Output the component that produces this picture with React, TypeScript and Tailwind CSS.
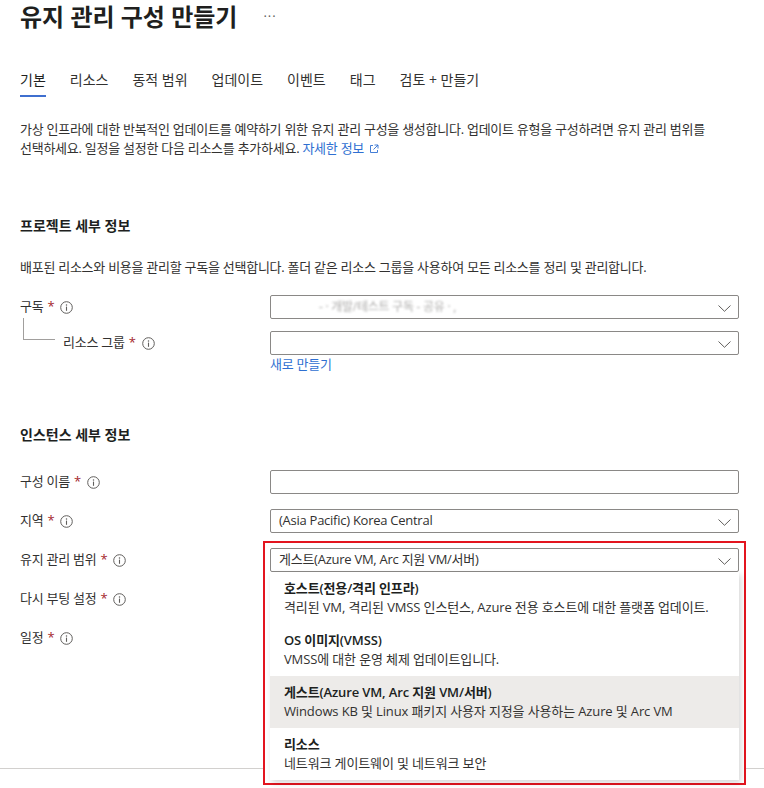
import React from 'react';

const InfoIcon: React.FC = () => (
    <svg width="13" height="13" viewBox="0 0 13 13" className="ml-[6px] shrink-0" fill="none">
        <circle cx="6.5" cy="6.5" r="5.8" stroke="#605e5c" strokeWidth="1" />
        <circle cx="6.5" cy="3.9" r="0.75" fill="#605e5c" />
        <path d="M6.5 5.6 V9.8" stroke="#605e5c" strokeWidth="1.1" />
    </svg>
);

const Chevron: React.FC = () => (
    <svg width="13" height="7" viewBox="0 0 13 7" className="absolute right-[7px] top-[9px]" fill="none">
        <path d="M0.5 0.5 L6.5 6.3 L12.5 0.5" stroke="#605e5c" strokeWidth="1" />
    </svg>
);

const LinkOut: React.FC = () => (
    <svg width="10" height="10" viewBox="0 0 10 10" className="ml-[5px] inline-block" fill="none">
        <path d="M4 1.5 H1.5 V8.5 H8.5 V6" stroke="#2f6fd1" strokeWidth="0.9" />
        <path d="M5.5 1 H9 V4.5 M9 1 L4.5 5.5" stroke="#2f6fd1" strokeWidth="0.9" />
    </svg>
);

const Label: React.FC<{ text: string }> = ({ text }) => (
    <span className="flex items-center whitespace-nowrap">
        {text}
        <span className="ml-[4px] text-[#a4262c]">*</span>
        <InfoIcon />
    </span>
);

const Box: React.FC<{ children?: React.ReactNode; select?: boolean; className?: string }> = ({ children, select, className }) => (
    <div className={`relative flex h-6 items-center rounded-[2px] border border-[#8a8886] bg-white pl-[8px] ${className ?? ''}`}>
        {children}
        {select && <Chevron />}
    </div>
);

const Row: React.FC<{ label: string; children?: React.ReactNode; className?: string }> = ({ label, children, className }) => (
    <div className={`flex h-6 items-center ${className ?? ''}`}>
        <div className="w-[250px]">
            <Label text={label} />
        </div>
        <div className="relative flex-1">{children}</div>
    </div>
);

const options = [
    { title: '호스트(전용/격리 인프라)', desc: '격리된 VM, 격리된 VMSS 인스턴스, Azure 전용 호스트에 대한 플랫폼 업데이트.' },
    { title: 'OS 이미지(VMSS)', desc: 'VMSS에 대한 운영 체제 업데이트입니다.' },
    { title: '게스트(Azure VM, Arc 지원 VM/서버)', desc: 'Windows KB 및 Linux 패키지 사용자 지정을 사용하는 Azure 및 Arc VM', active: true },
    { title: '리소스', desc: '네트워크 게이트웨이 및 네트워크 보안' },
];

const tabs = ['기본', '리소스', '동적 범위', '업데이트', '이벤트', '태그', '검토 + 만들기'];

export default function App() {
    return (
        <div className="h-[788px] w-[764px] overflow-hidden bg-white font-['Open_Sans','Noto_Sans_CJK_KR',sans-serif] text-[13px] tracking-[-0.02em] text-[#323130]">
            <div className="pl-[20px] pr-[25px]">
                {/* header */}
                <div className="flex h-[34px] items-center">
                    <h1 className="text-[24px] font-bold leading-[30px] tracking-normal text-[#201f1e]">유지 관리 구성 만들기</h1>
                    <span className="ml-[26px] text-[13px] tracking-[1px] text-[#605e5c]">···</span>
                </div>

                {/* tabs */}
                <div className="mt-[34px] flex gap-[24px] text-[14px] tracking-normal">
                    {tabs.map((t, i) => (
                        <div
                            key={t}
                            className={`pt-[2px] pb-[5px] leading-[20px] border-b-2 ${i === 0 ? 'border-[#3f6fcf] text-[#201f1e]' : 'border-transparent text-[#323130]'}`}
                        >
                            {t}
                        </div>
                    ))}
                </div>

                <p className="mt-[23px] whitespace-nowrap leading-[19px]">
                    가상 인프라에 대한 반복적인 업데이트를 예약하기 위한 유지 관리 구성을 생성합니다. 업데이트 유형을 구성하려면 유지 관리 범위를
                    <br />
                    선택하세요. 일정을 설정한 다음 리소스를 추가하세요.{' '}
                    <a className="inline-flex items-center text-[#2f6fd1]">
                        자세한 정보
                        <LinkOut />
                    </a>
                </p>

                {/* project details */}
                <h2 className="mt-[58px] text-[14px] font-bold leading-[20px] tracking-normal text-[#201f1e]">프로젝트 세부 정보</h2>
                <p className="mt-[22px] whitespace-nowrap leading-[19px]">
                    배포된 리소스와 비용을 관리할 구독을 선택합니다. 폴더 같은 리소스 그룹을 사용하여 모든 리소스를 정리 및 관리합니다.
                </p>

                <Row label="구독" className="mt-[18px]">
                    <Box select>
                        <span className="pl-[40px] text-[12px] text-[#8a8886] opacity-70 blur-[1.2px]">- · 개발/테스트 구독 - 공유 · ,</span>
                    </Box>
                </Row>

                <div className="mt-[12px] flex h-6 items-center">
                    <div className="flex h-6 w-[250px] items-center">
                        <div className="ml-[3px] -mt-[13px] h-[22px] w-[32px] shrink-0 self-start border-b border-l border-[#a19f9d]" />
                        <span className="ml-[8px]">
                            <Label text="리소스 그룹" />
                        </span>
                    </div>
                    <div className="flex-1">
                        <Box select />
                    </div>
                </div>
                <div className="flex">
                    <div className="w-[250px]" />
                    <a className="leading-[19px] text-[#2f6fd1]">새로 만들기</a>
                </div>

                {/* instance details */}
                <h2 className="mt-[51px] text-[14px] font-bold leading-[20px] tracking-normal text-[#201f1e]">인스턴스 세부 정보</h2>

                <Row label="구성 이름" className="mt-[25px]">
                    <Box />
                </Row>
                <Row label="지역" className="mt-[15px]">
                    <Box select>(Asia Pacific) Korea Central</Box>
                </Row>
                <Row label="유지 관리 범위" className="mt-[15px]">
                    <div className="absolute -left-[7px] -top-[7px] z-10 h-[244px] w-[483px] border-2 border-[#e3151f] bg-white" />
                    <Box select className="z-20">
                        게스트(Azure VM, Arc 지원 VM/서버)
                    </Box>
                    <div className="absolute left-0 top-full z-20 h-[208px] w-full bg-white tracking-[-0.01em] shadow-[2px_3px_6px_rgba(0,0,0,0.16)]">
                        {options.map((o) => (
                            <div key={o.title} className={`h-[52px] px-[14px] py-[7px] leading-[19px] whitespace-nowrap ${o.active ? 'bg-[#edebe9]' : ''}`}>
                                <div className="font-semibold text-[#201f1e]">{o.title}</div>
                                <div>{o.desc}</div>
                            </div>
                        ))}
                    </div>
                </Row>
                <Row label="다시 부팅 설정" className="mt-[15px]" />
                <Row label="일정" className="mt-[15px]" />
            </div>

            <div className="mt-[118px] h-[20px] border-t border-[#d2d0ce]" />
        </div>
    );
}
